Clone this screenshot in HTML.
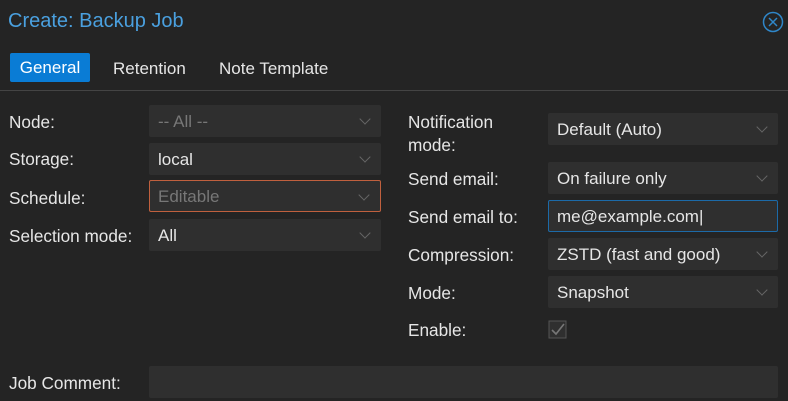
<!DOCTYPE html><html><head><style>
body{margin:0;width:788px;height:401px;background:#242424;font-family:"Liberation Sans",sans-serif;color:#e6e6e6;font-size:16px;position:relative;overflow:hidden}
.a{position:absolute}
.f{position:absolute;background:#2f2f2f;border-radius:2px;height:32px;box-sizing:border-box;padding-left:9px;line-height:34px;font-size:17px}
.f .c{position:absolute;right:12px;top:10px;width:7px;height:7px;border-right:1.5px solid #666;border-bottom:1.5px solid #666;transform:rotate(45deg)}
.l{position:absolute;font-size:17.2px;color:#e6e6e6}
</style></head><body>
<div class="a" style="left:8px;top:10px;font-size:20px;color:#4aa0df">Create: Backup Job</div>
<svg class="a" style="left:762px;top:11px" width="22" height="22"><circle cx="11" cy="11" r="9.5" fill="none" stroke="#2f86c8" stroke-width="1.5"/><path d="M7 7L15 15M15 7L7 15" stroke="#2f86c8" stroke-width="1.5"/></svg>
<div class="a" style="left:10px;top:53px;width:80px;height:29px;background:#0a7cd5;border-radius:2px;text-align:center;line-height:30px;font-size:17px;color:#fff">General</div>
<div class="a" style="left:113px;top:59px;font-size:17px">Retention</div>
<div class="a" style="left:219px;top:59px;font-size:17px">Note Template</div>
<div class="a" style="left:0;top:90px;width:788px;height:1px;background:#444"></div>
<div class="l" style="left:9px;top:112px">Node:</div>
<div class="f" style="left:149px;top:105px;width:232px;color:#777">-- All --<span class="c"></span></div>
<div class="l" style="left:9px;top:149px">Storage:</div>
<div class="f" style="left:149px;top:143px;width:232px">local<span class="c"></span></div>
<div class="l" style="left:9px;top:188px">Schedule:</div>
<div class="f" style="left:149px;top:180px;width:232px;border:1px solid #c0603e;line-height:32px;padding-left:8px;color:#777">Editable<span class="c"></span></div>
<div class="l" style="left:9px;top:226px">Selection mode:</div>
<div class="f" style="left:149px;top:219px;width:232px">All<span class="c"></span></div>
<div class="l" style="left:408px;top:111px;line-height:23px">Notification<br>mode:</div>
<div class="f" style="left:548px;top:113px;width:230px">Default (Auto)<span class="c"></span></div>
<div class="l" style="left:408px;top:169px">Send email:</div>
<div class="f" style="left:548px;top:162px;width:230px">On failure only<span class="c"></span></div>
<div class="l" style="left:408px;top:207px">Send email to:</div>
<div class="f" style="left:548px;top:200px;width:230px;border:1px solid #1c6aa8;line-height:32px;padding-left:8px">me@example.com|</div>
<div class="l" style="left:408px;top:245px">Compression:</div>
<div class="f" style="left:548px;top:238px;width:230px">ZSTD (fast and good)<span class="c"></span></div>
<div class="l" style="left:408px;top:283px">Mode:</div>
<div class="f" style="left:548px;top:276px;width:230px">Snapshot<span class="c"></span></div>
<div class="l" style="left:408px;top:320px">Enable:</div>
<svg class="a" style="left:548px;top:320px" width="20" height="20"><rect x="1" y="1" width="17" height="17" fill="#2f2f2f" stroke="#555"/><path d="M4 10L8 14L16 4" fill="none" stroke="#777" stroke-width="1.6"/></svg>
<div class="l" style="left:9px;top:373px">Job Comment:</div>
<div class="f" style="left:149px;top:366px;width:629px"></div>
</body></html>
